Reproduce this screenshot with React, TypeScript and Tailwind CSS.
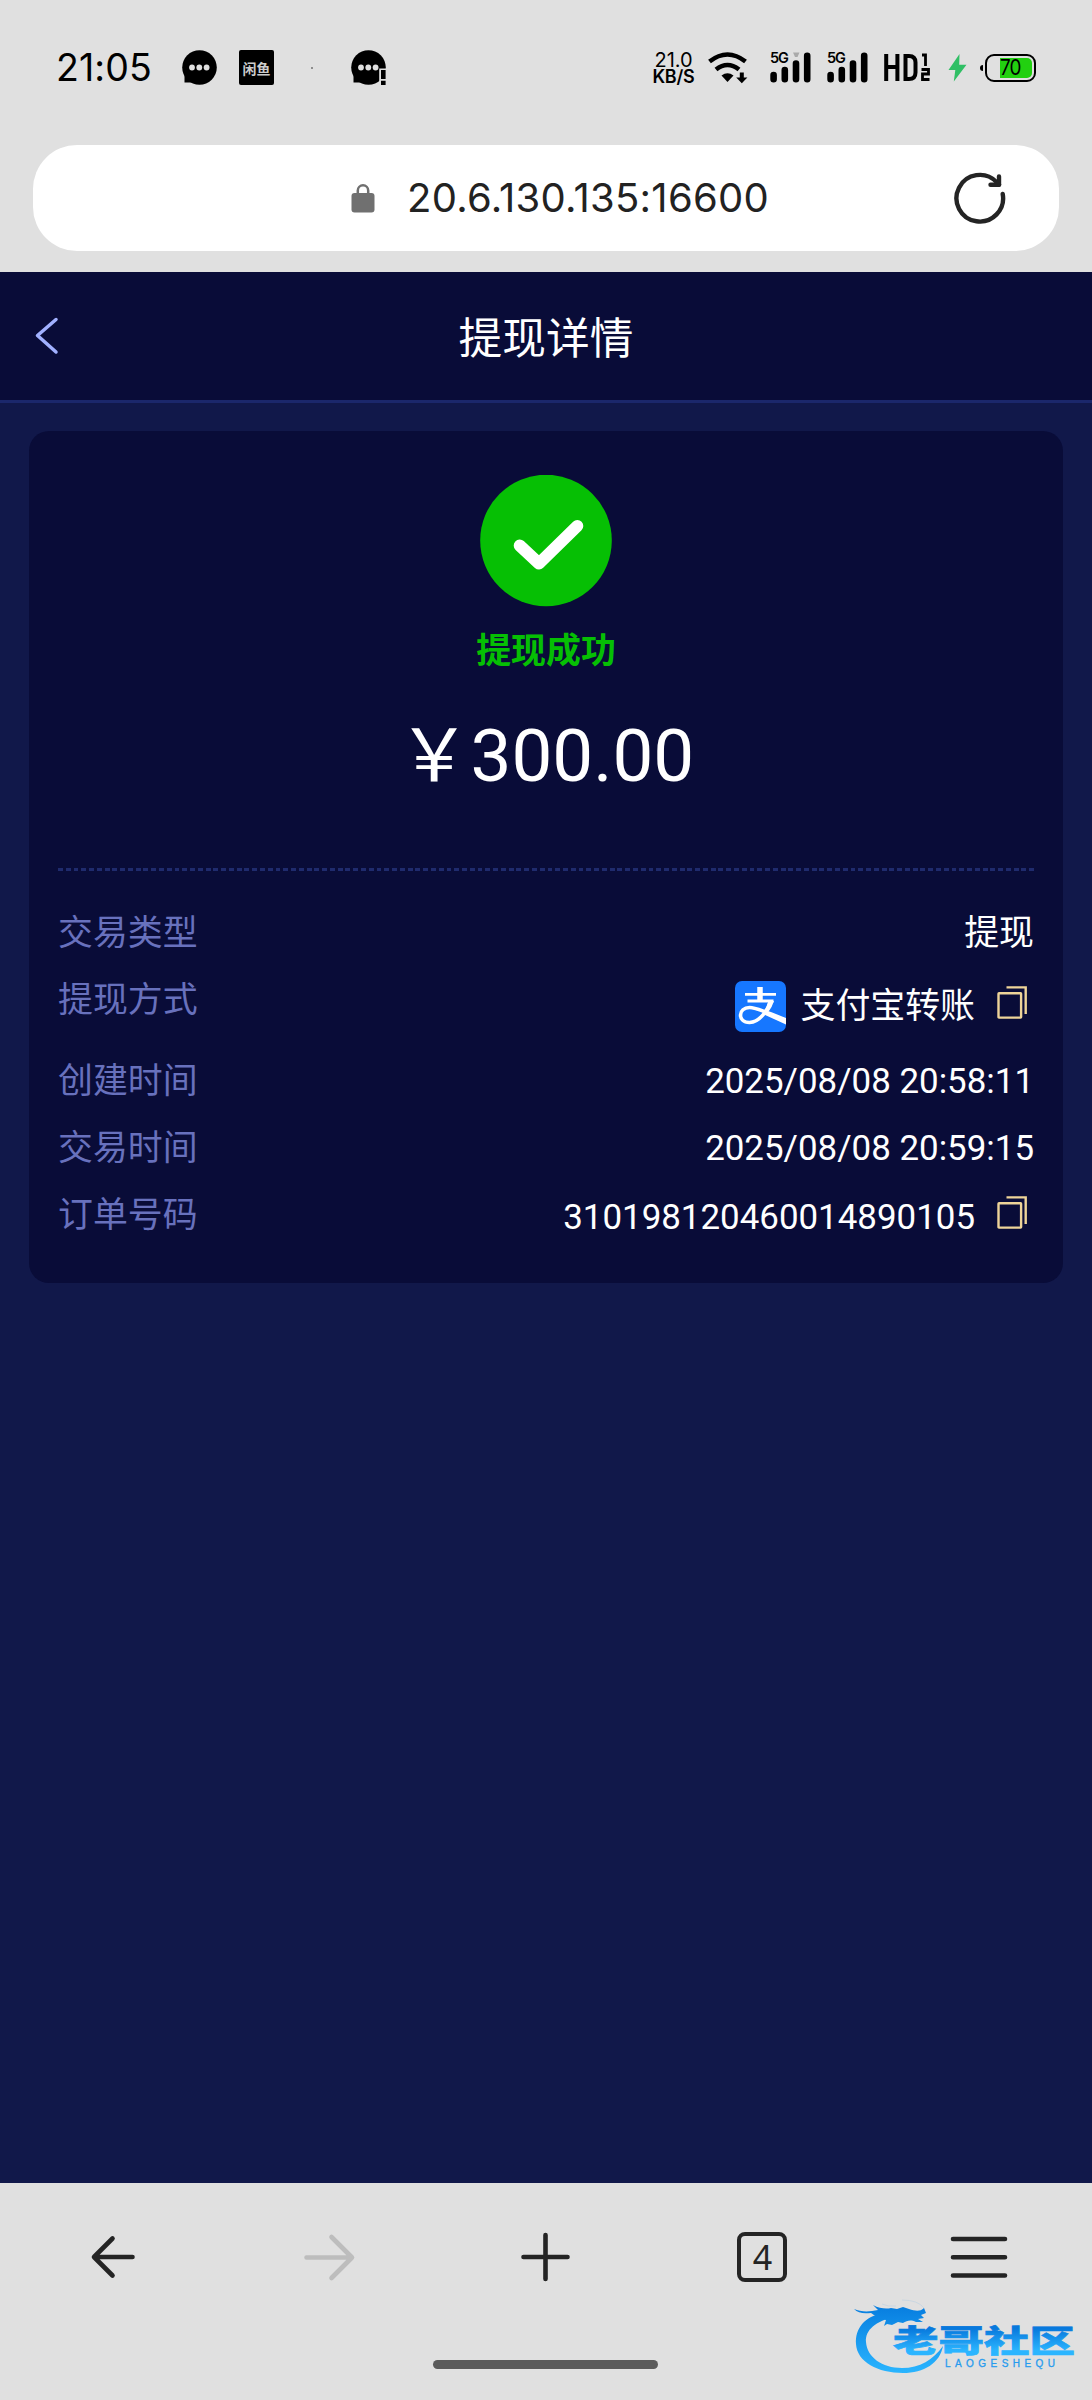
import type { ReactNode } from "react"

function ChatBubble() {
  return (
    <>
      <circle cx="17.5" cy="17.5" r="17.3" fill="#000" />
      <path d="M2.5 20v12.5H17V20Z" fill="#000" />
      <circle cx="10" cy="17.5" r="2.9" fill="#e0e0e0" />
      <circle cx="17.3" cy="17.5" r="2.9" fill="#e0e0e0" />
      <circle cx="24.6" cy="17.5" r="2.9" fill="#e0e0e0" />
    </>
  )
}

function Signal({ marker = false }: { marker?: boolean }) {
  return (
    <div className="relative h-[31px] w-[41px]">
      <svg width="41" height="31" viewBox="0 0 41 31">
        {marker && <path d="M23 0.5h6.500l-2 4.500h-2.500Z" fill="#aaa" />}
        <g stroke="#000" strokeWidth="6.6" strokeLinecap="round">
          <path d="M3.600 23v4.200M14.800 18v9.200M26 11.500v15.700M37.200 3.800v23.400" />
        </g>
      </svg>
      <span className="absolute top-[-2px] left-0 font-['Inter',sans-serif] text-[14.5px] leading-[16px] font-semibold tracking-[-1px]">5G</span>
    </div>
  )
}

function StatusBar() {
  return (
    <div className="flex h-[135px] items-center pl-[56px] font-['Inter',sans-serif] text-black">
      <span className="w-[126px] text-[37.5px] leading-none tracking-[0.1px]">21:05</span>
      <svg width="35" height="35" viewBox="0 0 35 35">
        <ChatBubble />
      </svg>
      <div className="ml-[22px] flex size-[35px] items-center justify-center rounded-[2px] bg-black font-['Noto_Sans_CJK_SC',sans-serif] text-[14px] leading-none font-bold text-[#ccc]">
        闲鱼
      </div>
      <div className="ml-[37px] size-[2px] rounded-full bg-neutral-500" />
      <svg className="ml-[38px]" width="36" height="35" viewBox="0 0 36 35">
        <ChatBubble />
        <path d="M28.200 18.500h8v17h-8z" fill="#e0e0e0" />
        <path d="M30 20h4.600v9H30zM30 30.800h4.600v4.200H30z" fill="#000" />
      </svg>

      <div className="ml-[265px] flex w-[43px] flex-col items-center">
        <span className="text-[20px] leading-[17px] tracking-[-0.1px]">21.0</span>
        <span className="text-[18px] leading-[15px] font-semibold tracking-[-0.2px]">KB/S</span>
      </div>
      <svg className="ml-[13px]" width="40" height="32" viewBox="0 0 40 32">
        <g fill="none" stroke="#000" strokeWidth="4.6">
          <path d="M1.500 9.500Q19.500-4.500 37.500 9.500" />
          <path d="M8 17.500Q19.500 8.500 31 17.500" />
        </g>
        <path d="M13.500 23.500Q19.500 19 25.500 23.500L19.500 30Z" />
        <path d="M31.800 20.500h4v5h3.600l-5.600 5.800-5.600-5.800h3.600Z" />
      </svg>
      <div className="ml-[22px]">
        <Signal marker />
      </div>
      <div className="ml-[16px]">
        <Signal />
      </div>
      <svg className="ml-[16px]" width="46" height="29" viewBox="0 0 46 29">
        <g fill="none" stroke="#000" strokeWidth="4">
          <path d="M2.200 1v27M13.400 1v27M2.200 14h11" />
          <path d="M21.500 3h3.500q6.500 0 6.500 6.500v10q0 6.500-6.500 6.500H21.500Z" />
        </g>
        <g fill="none" stroke="#000" strokeWidth="2.8">
          <path d="M38 2h3.500v11M37.500 16.500h7v4.500h-6v5.500h7" />
        </g>
      </svg>
      <svg className="ml-[18px]" width="19" height="28" viewBox="0 0 19 28">
        <path d="M11.500 0L0.500 16h6.800L5.800 27.500L18.500 10.800h-7.300Z" fill="#30bf65" />
      </svg>
      <div className="ml-[13px] h-[6px] w-[3px] rounded-l-full bg-black" />
      <div className="ml-[2px] flex h-[28px] w-[51px] justify-end rounded-[9px] border-[2.5px] border-black p-[2px]">
        <div className="flex h-full w-[32px] items-center rounded-r-[5px] bg-[#22d010] text-[21.5px] leading-none tracking-[-1px]">
          <span className="inline-block origin-left scale-x-[0.88]">70</span>
        </div>
      </div>
    </div>
  )
}

function AddressBar() {
  return (
    <div className="mx-[33px] mt-[10px] flex h-[106px] items-center rounded-[44px] bg-white">
      <svg className="ml-[318px]" width="24" height="29" viewBox="0 0 24 29">
        <path d="M6.800 10V6.500a5.200 5.200 0 0 1 10.400 0V10" fill="none" stroke="#707070" strokeWidth="2.5" />
        <rect x="0.5" y="9" width="23" height="19.5" rx="3" fill="#707070" />
      </svg>
      <span className="ml-[32px] w-[366px] font-['Inter',sans-serif] text-[40px] leading-none tracking-[0.28px] whitespace-nowrap text-[#222]">
        20.6.130.135:16600
      </span>
      <svg className="ml-[179px]" width="54" height="54" viewBox="0 0 54 54" fill="none" stroke="#242424" strokeWidth="4.4" strokeLinecap="round" strokeLinejoin="round">
        <path d="M50.700 23A23.300 23.300 0 1 1 44.500 11L47 13.700" />
        <path d="M47 5.500v8.200H38.500" />
      </svg>
    </div>
  )
}

function CopyIcon() {
  return (
    <svg width="30" height="33" viewBox="0 0 30 33" fill="none" stroke="#eed499" strokeWidth="2.4">
      <rect x="1.5" y="7.2" width="22.6" height="24.4" rx="0.5" />
      <path d="M9.500 1.400h19.200V28" />
    </svg>
  )
}

function AlipayIcon() {
  return (
    <svg width="51" height="51" viewBox="0 0 51 51">
      <rect width="51" height="51" rx="7" fill="#1677ff" />
      <g fill="none" stroke="#fff">
        <path d="M25 6v14" strokeWidth="5.5" />
        <path d="M10 13.300h31M12.500 20h26" strokeWidth="2.8" />
        <path d="M35.800 19.500C33 29 25 41 14.500 41.500C8 41.500 5.500 37.500 5.500 34C5.500 30 9 26.500 14.500 26.500C22 26.500 29 30.500 51 39" strokeWidth="3.6" />
      </g>
      <path d="M33.500 20h5.500Q37 26.500 33 31.500L51 37.500V43.500L29 33.500Z" fill="#fff" />
    </svg>
  )
}

function Row({ label, className, children }: { label: string; className: string; children: ReactNode }) {
  return (
    <div className={`flex justify-between ${className}`}>
      <span className="text-[#6871bd]">{label}</span>
      <div className="flex items-start text-white">{children}</div>
    </div>
  )
}

function DetailCard() {
  return (
    <section className="mx-[29px] mt-[28px] h-[852px] rounded-[20px] bg-[#090c38] px-[29px] pt-[44px]">
      <div className="flex flex-col items-center">
        <svg width="132" height="132" viewBox="0 0 132 132">
          <circle cx="66" cy="65.5" r="65.8" fill="#06bf04" />
          <path d="M39.700 70.500L59 88.500L97.300 51" fill="none" stroke="#fff" strokeWidth="12" strokeLinecap="round" strokeLinejoin="round" />
        </svg>
        <p className="mt-[19px] text-[34.9px] leading-[52px] font-bold text-[#06bf04]">提现成功</p>
        <p className="mt-[34px] flex h-[88px] items-center text-[72.8px] leading-none text-white">￥300.00</p>
      </div>
      <div className="mt-[68px] h-[3px] bg-[repeating-linear-gradient(90deg,#1f2b6d_0_4.9px,transparent_4.9px_7.77px)]" />
      <div className="pt-[38px] text-[34.9px] leading-[50px]">
        <Row label="交易类型" className="h-[67px]">提现</Row>
        <Row label="提现方式" className="h-[81px]">
          <div className="mt-[5px]">
            <AlipayIcon />
          </div>
          <span className="mt-[6px] ml-[15px]">支付宝转账</span>
          <div className="mt-[10px] mr-[7px] ml-[22px]">
            <CopyIcon />
          </div>
        </Row>
        <Row label="创建时间" className="h-[67px]">2025/08/08 20:58:11</Row>
        <Row label="交易时间" className="h-[67px]">2025/08/08 20:59:15</Row>
        <Row label="订单号码" className="h-[67px]">
          <span className="mt-[2px]">310198120460014890105</span>
          <div className="mt-[5px] mr-[7px] ml-[22px]">
            <CopyIcon />
          </div>
        </Row>
      </div>
    </section>
  )
}

function NavIcon({ d, color = "#242424" }: { d: string; color?: string }) {
  return (
    <svg width="60" height="60" viewBox="-30 -30 60 60" fill="none" stroke={color} strokeWidth="4.6" strokeLinecap="round" strokeLinejoin="round">
      <path d={d} />
    </svg>
  )
}

function BottomBar() {
  return (
    <nav className="flex h-[217px] flex-col items-center bg-[#e0e0e0]">
      <div className="grid h-[148px] w-[1082px] grid-cols-5 place-items-center">
        <NavIcon d="M19.500 0H-18.500M-0.500-18.500L-19 0L-0.500 18.500" />
        <NavIcon d="M-23.500 0.500H22M1.500-20L22 0.500L1.500 21" color="#bdbdbd" />
        <NavIcon d="M-22.500 0H21.500M-0.500-22V22" />
        <div className="flex size-[50px] items-center justify-center rounded-[8px] border-4 border-[#242424] font-['Noto_Sans',sans-serif] text-[34px] leading-none text-[#242424]">
          4
        </div>
        <NavIcon d="M-26-18H26M-26 0.300H26M-26 18.500H26" />
      </div>
      <div className="mt-[29px] mr-[1px] h-[9px] w-[225px] rounded-full bg-[#5b5b5b]" />
    </nav>
  )
}

function CommunityLogo() {
  return (
    <svg className="absolute top-[2290px] left-[840px]" width="252" height="100" viewBox="0 0 252 100">
      <defs>
        <linearGradient id="ring" x1="0" y1="18" x2="0" y2="83" gradientUnits="userSpaceOnUse">
          <stop offset="0" stopColor="#087fe0" />
          <stop offset="1" stopColor="#2ab5ff" />
        </linearGradient>
        <linearGradient id="word" x1="0" y1="-38" x2="0" y2="2" gradientUnits="userSpaceOnUse">
          <stop offset="0.1" stopColor="#0879dd" />
          <stop offset="0.9" stopColor="#2bb5ff" />
        </linearGradient>
      </defs>
      <g fill="url(#ring)">
        <path d="M44 23C24 26 15 39 16 54C17 72 38 83 63 83C84 83 100 73 103 56C93 70 80 78 62 78C42 78 27 67 26 52C25 40 36 31 54 27Z" />
        <path d="M14 19C21 22 29 22 38 20L33 15C40 19 47 19 51 18L57 19L63 17L69 19C75 21 80 22 84 18L86 23L81 25L84 28L78 29L83 32L76 32C70 29 67 31 63 33L58 32L52 35L47 34L44 36L46 30C38 28 34 25 31 23C23 24 18 23 14 19Z" />
      </g>
      <path d="M42 14Q48 17 56 16M62 10Q78 10 84 18" fill="none" stroke="#cad7e2" strokeWidth="1" />
      <g transform="translate(53 62) scale(1 0.68)">
        <text fontSize="45" fontWeight="900" textLength="182" lengthAdjust="spacingAndGlyphs" fill="url(#word)" stroke="url(#word)" strokeWidth="1" className="font-['Noto_Sans_CJK_SC',sans-serif]">
          老哥社区
        </text>
      </g>
      <text x="105" y="76.5" fontSize="10" textLength="110" fill="#279bee" stroke="#279bee" strokeWidth="0.3" className="font-['Liberation_Sans',sans-serif]">
        LAOGESHEQU
      </text>
    </svg>
  )
}

export default function App() {
  return (
    <div className="relative flex h-[2400px] w-[1092px] flex-col overflow-hidden bg-[#11184a] font-['Roboto','Noto_Sans_CJK_SC',sans-serif]">
      <div className="h-[272px] shrink-0 bg-[#e0e0e0]">
        <StatusBar />
        <AddressBar />
      </div>
      <header className="flex h-[131px] shrink-0 items-center border-b-[3px] border-[#1b276b] bg-[#090c38]">
        <svg className="ml-[34px]" width="26" height="38" viewBox="0 0 26 38" fill="none" stroke="#a1b1ff" strokeWidth="3.5" strokeLinecap="round" strokeLinejoin="round">
          <path d="M22 2.500L3.500 18.500L22 35" />
        </svg>
        <h1 className="flex-1 pt-[6px] pr-[60px] text-center text-[43.7px] leading-[64px] text-white">提现详情</h1>
      </header>
      <main className="flex-1">
        <DetailCard />
      </main>
      <BottomBar />
      <CommunityLogo />
    </div>
  )
}
